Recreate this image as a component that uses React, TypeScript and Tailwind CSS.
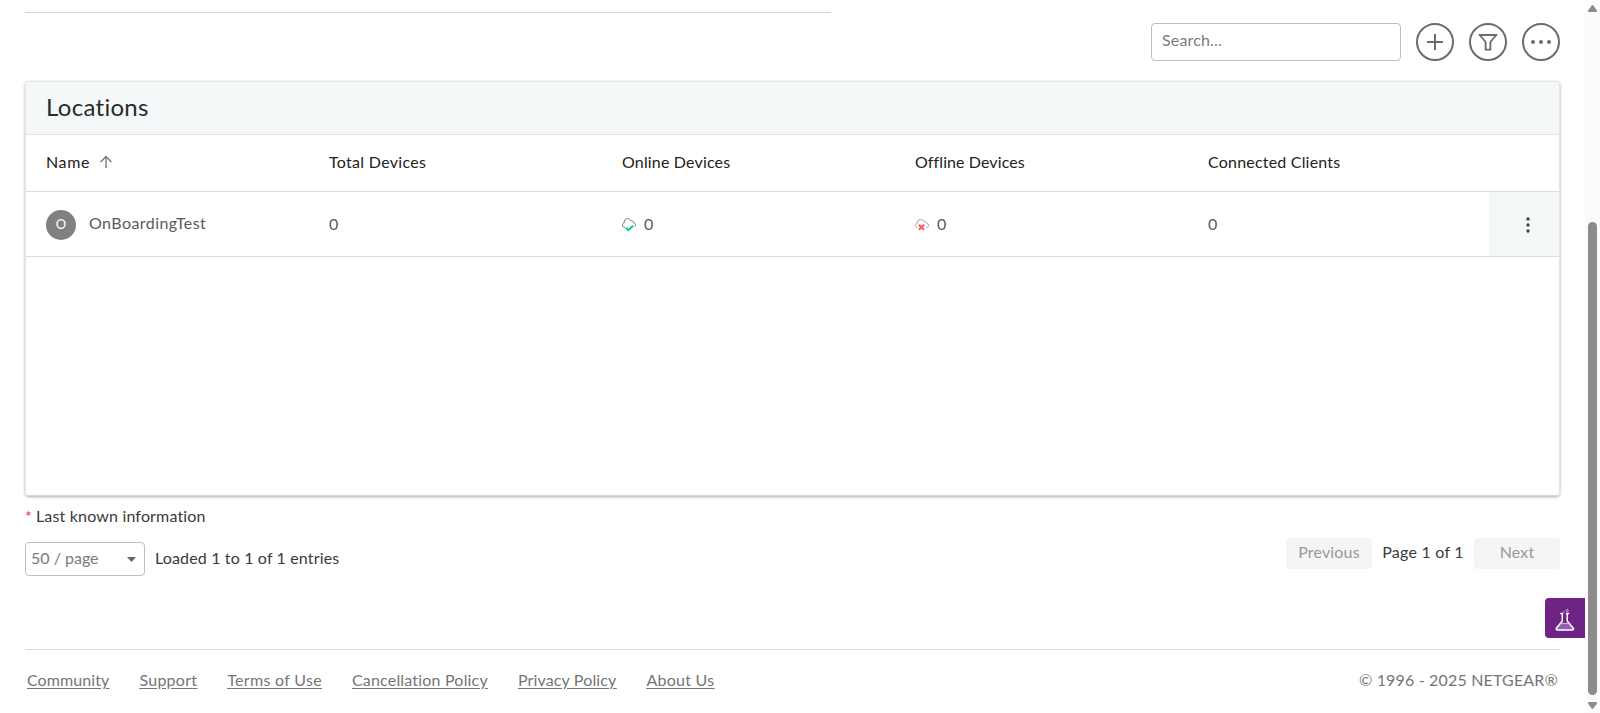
import type { ReactNode } from "react";

const GRID = "grid grid-cols-[283px_293px_293px_293px_301px_70px] items-center";

function CircleButton({ label, children }: { label: string; children: ReactNode }) {
  return (
    <button aria-label={label} className="flex size-[38px] items-center justify-center rounded-full border-2 border-[#6c6c6c] text-[#6c6c6c]">
      {children}
    </button>
  );
}

function CloudOnline() {
  return (
    <svg width="14" height="14" viewBox="0 0 14 14" fill="none" className="mt-px shrink-0">
      <path d="M3 9.500C1.400 9.500.5 8.400.5 7.100c0-1.200.8-2 1.700-2.300C1.900 2.300 3.400.6 5.500.6c1.600 0 2.700.9 3.200 2.100 1.600-.4 2.800.6 2.900 2 1.200.3 1.900 1.200 1.900 2.300 0 .7-.3 1.300-.7 1.700" stroke="#777" />
      <path d="M3.900 9.700l2.500 2.500 4.700-4.500" stroke="#04d071" strokeWidth="2" />
    </svg>
  );
}

function CloudOffline() {
  return (
    <svg width="14" height="14" viewBox="0 0 14 14" fill="none" className="mt-px shrink-0">
      <path d="M2.500 9.500C1.200 9.300.5 8.400.5 7.300c0-1.100.8-1.800 1.700-2C2 3.200 3.500 1.600 5.500 1.600c1.500 0 2.700.7 3.200 1.800 1.600-.3 2.800.6 2.900 1.800 1.200.3 1.900 1.100 1.900 2.200 0 1-.7 1.900-1.900 2.100" stroke="#9c9c9c" />
      <path d="M3.900 6.700l5.200 5M9.100 6.700l-5.200 5" stroke="#ff5a5a" strokeWidth="2.100" />
    </svg>
  );
}

function Flask() {
  return (
    <svg width="20" height="24" viewBox="0 0 20 24" fill="none">
      <path d="M4.300 15.500h11l3 4.800c.4 1-.1 1.700-1.200 1.700H2.700c-1.100 0-1.600-.7-1.200-1.700z" fill="#9760ae" />
      <path d="M5.200 5.500h3M11 5.500h3.200M7.300 5.500V13l-5.900 7.300c-.6 1 0 1.700 1.200 1.700h14.500c1.200 0 1.800-.7 1.200-1.700L12.200 13V5.500" stroke="#fff" strokeWidth="1.500" />
      <path d="M4.600 15.400h10.600" stroke="#d9c3e2" />
      <circle cx="12.200" cy="2.500" r="1.100" stroke="#d9c3e2" strokeWidth=".8" />
      <circle cx="8.900" cy="4" r=".7" fill="#d9c3e2" />
    </svg>
  );
}

export default function App() {
  return (
    <div className="relative flex h-[713px] w-[1600px] overflow-hidden bg-white font-['Lato','Liberation_Sans',sans-serif] text-base leading-6 tracking-[0.17px] text-[#3a3a3a]">
      <div className="flex w-[1585px] flex-col pl-[25px] pr-[25px] pt-3">
        <div className="w-[806px] shrink-0 border-t border-[#d2d2d2]" />

        <div className="mt-2.5 flex shrink-0 justify-end gap-[15px]">
          <div className="h-[38px] w-[250px] rounded-[4px] border border-[#bfbfbf] pl-2.5 pt-1 text-[#7c7c7c]">Search...</div>
          <CircleButton label="Add">
            <svg width="16" height="16" viewBox="0 0 16 16" stroke="currentColor" strokeWidth="2">
              <path d="M8 0v16M0 8h16" />
            </svg>
          </CircleButton>
          <CircleButton label="Filter">
            <svg width="20" height="20" viewBox="0 0 20 20" fill="none" stroke="currentColor" strokeWidth="1.800">
              <path d="M2 3.200h16L12.400 10v7.600H7.600V10L2 3.200z" />
              <path d="M1 3h18" strokeWidth="2" />
            </svg>
          </CircleButton>
          <CircleButton label="More">
            <svg width="20" height="4" viewBox="0 0 20 4" fill="currentColor">
              <circle cx="2" cy="2" r="2" />
              <circle cx="10" cy="2" r="2" />
              <circle cx="18" cy="2" r="2" />
            </svg>
          </CircleButton>
        </div>

        <section className="mt-5 h-[415px] shrink-0 overflow-hidden rounded-[4px] border border-[#e2e6e8] border-b-[#d6d6d6] shadow-[0_1px_3px_rgba(0,0,0,0.32)]">
          <div className="h-[53px] border-b border-[#dfe7ea] bg-[#f4f8f9] pl-5 pt-[9px]">
            <h2 className="text-2xl leading-8 tracking-[0.3px] text-[#2a2a2a]">Locations</h2>
          </div>
          <div className={`${GRID} h-[57px] border-b border-[#dedede] pb-0.5 text-[#222]`}>
            <div className="flex items-center gap-[9px] pl-5">
              <span className="tracking-[0.6px]">Name</span>
              <svg width="14" height="14" viewBox="0 0 14 14" fill="none" stroke="#6f7c84" strokeWidth="1.400">
                <path d="M7 13V1.500M1.600 7L7 1.500 12.400 7" />
              </svg>
            </div>
            <div className="pl-5 tracking-[0.3px]">Total Devices</div>
            <div className="pl-5">Online Devices</div>
            <div className="pl-5 tracking-[0.1px]">Offline Devices</div>
            <div className="pl-5 tracking-[0.2px]">Connected Clients</div>
          </div>
          <div className={`${GRID} h-[65px] border-b border-[#dedede] text-[#5a5a5a]`}>
            <div className="flex items-center gap-[13px] pl-5 pt-px">
              <span className="flex size-[30px] items-center justify-center rounded-full bg-[#808080] pb-0.5 text-[13px] text-white">O</span>
              <span className="-mt-1 tracking-[0.43px]">OnBoardingTest</span>
            </div>
            <div className="pl-5">0</div>
            <div className="flex items-center gap-2 pl-5"><CloudOnline /><span>0</span></div>
            <div className="flex items-center gap-2 pl-5"><CloudOffline /><span>0</span></div>
            <div className="pl-5">0</div>
            <div className="flex h-full items-center justify-center bg-[#f4f8f9] pl-2 pt-0.5">
              <svg width="4" height="16" viewBox="0 0 4 16" fill="#444">
                <circle cx="2" cy="2" r="1.700" />
                <circle cx="2" cy="8" r="1.700" />
                <circle cx="2" cy="14" r="1.700" />
              </svg>
            </div>
          </div>
        </section>

        <p className="mt-2 shrink-0"><span className="mr-1 text-[#f0284a]">*</span>Last known information</p>

        <div className="mt-2.5 flex shrink-0 items-start">
          <div className="mt-1 flex h-[34px] w-[120px] items-center justify-between rounded-[4px] border border-[#bfbfbf] pl-[5px] pr-2 tracking-normal text-[#7c7c7c]">
            <span className="-mt-0.5">50 / page</span>
            <svg width="9" height="5" viewBox="0 0 9 5" fill="#666"><path d="M0 0h9L4.500 5z" /></svg>
          </div>
          <span className="ml-2.5 mt-2 tracking-[0.15px]">Loaded 1 to 1 of 1 entries</span>
          <div className="ml-auto flex items-center gap-2.5">
            <button className="flex h-[31px] w-[86px] items-center justify-center rounded-[4px] bg-[#f5f5f5] pb-[3px] tracking-[0.17px] text-[#999]">Previous</button>
            <span className="w-[82px] pb-[3px] text-center tracking-[0.23px]">Page 1 of 1</span>
            <button className="flex h-[31px] w-[86px] items-center justify-center rounded-[4px] bg-[#f5f5f5] pb-[3px] text-[#999]">Next</button>
          </div>
        </div>

        <footer className="mt-[73px] flex shrink-0 justify-between border-t border-[#dcdcdc] pl-0.5 pr-0.5 pt-[18px] text-[#757575]">
          <nav className="flex gap-[30px] underline underline-offset-2">
            <a className="tracking-[0.09px]">Community</a>
            <a className="tracking-[0.27px]">Support</a>
            <a className="tracking-[0.3px]">Terms of Use</a>
            <a className="tracking-[0.19px]">Cancellation Policy</a>
            <a className="tracking-[0.15px]">Privacy Policy</a>
            <a className="tracking-[0.25px]">About Us</a>
          </nav>
          <span className="tracking-[0.17px]">© 1996 - 2025 NETGEAR®</span>
        </footer>
      </div>

      <div className="flex w-[15px] flex-col items-center bg-[#fbfbfb] pl-px pr-0.5 pt-[5px]">
        <svg width="9" height="7" viewBox="0 0 9 7" fill="#8b8b8b" className="shrink-0"><path d="M3.700.5Q4.500-.4 5.300.5L8.800 5.300Q9.300 7 8 7H1Q-.3 7 .2 5.300z" /></svg>
        <div className="mt-[210px] h-[473px] w-[9px] shrink-0 rounded-full bg-[#8b8b8b]" />
        <svg width="9" height="7" viewBox="0 0 9 7" fill="#8b8b8b" className="mt-[7px] shrink-0"><path d="M3.700 6.500Q4.500 7.400 5.300 6.500L8.800 1.700Q9.300 0 8 0H1Q-.3 0 .2 1.700z" /></svg>
      </div>

      <button aria-label="Labs" className="absolute left-[1545px] top-[598px] flex size-10 items-center justify-center rounded-l-[4px] bg-[#6f2384] pt-1">
        <Flask />
      </button>
    </div>
  );
}
